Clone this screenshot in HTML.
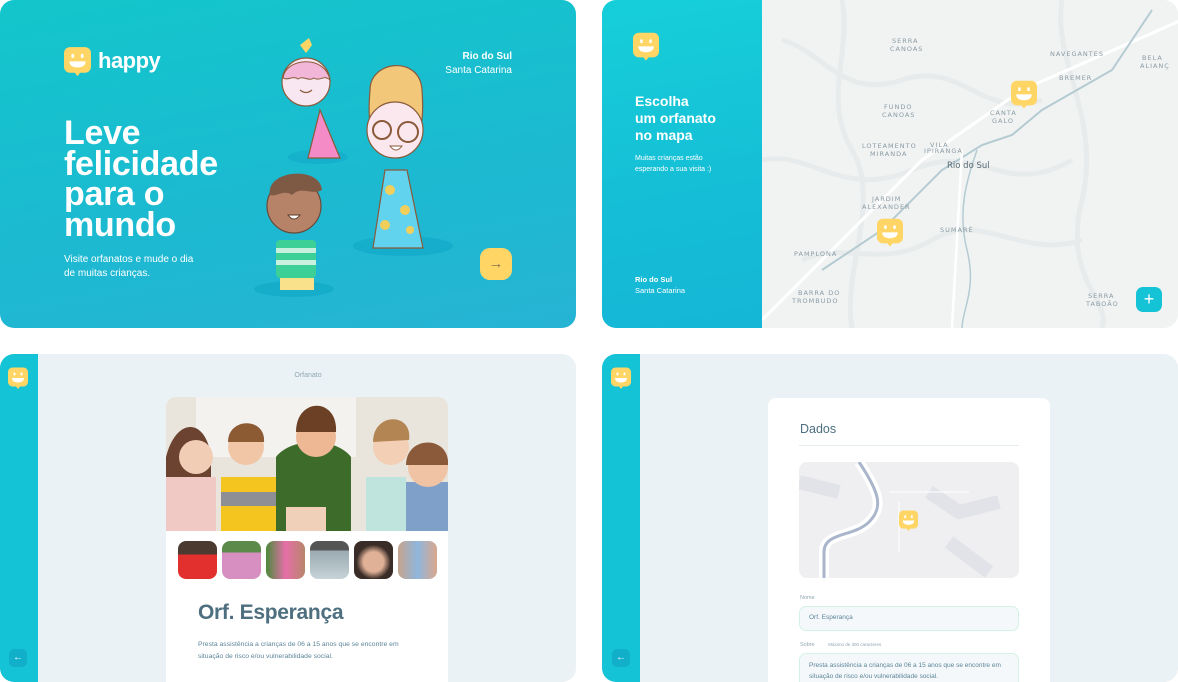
<!DOCTYPE html>
<html><head><meta charset="utf-8"><style>
*{margin:0;padding:0;box-sizing:border-box}
body{width:1178px;height:682px;background:#fff;position:relative;overflow:hidden;font-family:"Liberation Sans",sans-serif}
.p{position:absolute;overflow:hidden;border-radius:14px}
.abs{position:absolute}
.w{color:#fff}
</style></head><body>
<svg width="0" height="0" style="position:absolute"><defs>
<symbol id="logo" viewBox="0 0 40 44"><path d="M9 0h22a9 9 0 0 1 9 9v20a9 9 0 0 1-9 9h-7l-4 5-4-5H9a9 9 0 0 1-9-9V9a9 9 0 0 1 9-9z" fill="#ffd666"/><rect x="11" y="10" width="4" height="6" rx="2" fill="#fff"/><rect x="25" y="10" width="4" height="6" rx="2" fill="#fff"/><path d="M8 21h24c0 6-5 9-12 9s-12-3-12-9z" fill="#fff"/></symbol>
</defs></svg>

<!-- Panel 1 -->
<div class="p" style="left:0;top:0;width:576px;height:328px;background:linear-gradient(170deg,#13c6cc 0%,#1cb9d1 60%,#27b4d4 100%)">
  <svg class="abs" style="left:64px;top:47px" width="27" height="30"><use href="#logo"/></svg>
  <div class="abs w" style="left:98px;top:48px;font-size:22px;font-weight:bold;letter-spacing:-0.5px">happy</div>
  <div class="abs w" style="left:440px;top:50px;width:72px;text-align:right;font-size:10px;line-height:14px"><b>Rio do Sul</b><br>Santa Catarina</div>
  <div class="abs w" style="left:64px;top:118px;font-size:34px;font-weight:bold;line-height:30.5px;letter-spacing:-0.3px">Leve<br>felicidade<br>para o<br>mundo</div>
  <div class="abs w" style="left:64px;top:253px;font-size:10px;line-height:14px">Visite orfanatos e mude o dia<br>de muitas crianças.</div>
  <div class="abs" style="left:480px;top:248px;width:32px;height:32px;border-radius:10px;background:#ffd666;color:#8d734b;font-size:15px;text-align:center;line-height:31px">→</div>
  <svg class="abs" style="left:240px;top:30px" width="230" height="270">
    <ellipse cx="54" cy="259" rx="40" ry="8" fill="#0fa7c7" opacity=".6"/>
    <ellipse cx="163" cy="216" rx="50" ry="10" fill="#0fa7c7" opacity=".6"/>
    <ellipse cx="78" cy="127" rx="30" ry="7" fill="#0fa7c7" opacity=".45"/>
    <path d="M80 80l-12 48h32z" fill="#f48bc7" stroke="#8a5a3a" stroke-width="1.2"/>
    <circle cx="66" cy="52" r="24" fill="#f8e7f0" stroke="#8a5a3a" stroke-width="1.2"/>
    <path d="M43 48c2-20 42-24 47 2c-6-6-10 2-16-2c-6 4-10-3-16 1c-5-4-10 2-15-1z" fill="#f2b6d8" stroke="#8a5a3a" stroke-width="1"/>
    <path d="M60 15l6 8 6-8-3-7z" fill="#ffd666"/>
    <path d="M60 60q6 5 12 0" fill="none" stroke="#8a5a3a" stroke-width="1.2"/>
    <path d="M130 60c0-30 50-35 52 0c2 30 0 40-10 45h-35c-8-5-9-20-7-45z" fill="#f2c77a" stroke="#8a5a3a" stroke-width="1.2"/>
    <circle cx="155" cy="100" r="28" fill="#fbe8ee" stroke="#8a5a3a" stroke-width="1.2"/>
    <circle cx="142" cy="100" r="9" fill="none" stroke="#8a5a3a" stroke-width="2"/>
    <circle cx="168" cy="102" r="10" fill="none" stroke="#8a5a3a" stroke-width="2"/>
    <path d="M150 116q6 8 12 0z" fill="#fff" stroke="#8a5a3a"/>
    <path d="M145 140l-12 78h50l-16-78z" fill="#61d3ef" stroke="#8a5a3a" stroke-width="1.2"/>
    <circle cx="150" cy="160" r="5" fill="#f2cf5a"/><circle cx="165" cy="180" r="5" fill="#f2cf5a"/><circle cx="145" cy="195" r="5" fill="#f2cf5a"/><circle cx="170" cy="200" r="4" fill="#f2cf5a"/>
    <circle cx="54" cy="176" r="27" fill="#b78368" stroke="#6a4a3a" stroke-width="1.2"/>
    <path d="M30 165c-5-25 50-30 52-5c-10 6-20-5-30 5c-8-6-15 2-22 0z" fill="#7e5a45"/>
    <path d="M48 185q6 8 12 0z" fill="#fff" stroke="#5a3a2a"/>
    <rect x="36" y="210" width="40" height="38" rx="4" fill="#3ccf96"/>
    <rect x="36" y="218" width="40" height="5" fill="#c8f0df"/><rect x="36" y="230" width="40" height="5" fill="#c8f0df"/>
    <rect x="40" y="248" width="34" height="12" fill="#f9e08a"/>
  </svg>
</div>

<!-- Panel 2 -->
<div class="p" style="left:602px;top:0;width:576px;height:328px;background:#f1f3f3">
  <svg class="abs" style="left:160px;top:0" width="416" height="328">
    <g fill="none" stroke="#e1e6e8" stroke-width="5" opacity=".6">
      <path d="M20 40c40 10 60 60 120 40s80 40 140 20"/><path d="M0 160c50-10 80 40 150 10s90 30 160-10"/><path d="M40 260c40-20 80 10 130-20s90 20 150 0"/><path d="M300 0c-10 60 40 120 20 200s30 100 20 128"/><path d="M80 0c10 50-20 100 10 150s-10 120 0 178"/>
    </g>
    <path d="M0 320l160-160 100-70 160-70" stroke="#fff" stroke-width="3" fill="none"/>
    <path d="M60 270l60-40 60-60 40-25 30-10 30-25 70-40 40-60" stroke="#b4cbd2" stroke-width="2" fill="none"/>
    <path d="M215 150c-10 30-20 60-10 100s-5 60-5 78" stroke="#b4cbd2" stroke-width="1.5" fill="none"/>
    <path d="M200 150l-10 178" stroke="#fff" stroke-width="2.5" fill="none"/>
    <g font-family="DejaVu Sans" font-size="6.5" fill="#8a9ba4" letter-spacing="1">
      <text x="130" y="43">SERRA</text><text x="128" y="51">CANOAS</text>
      <text x="122" y="109">FUNDO</text><text x="120" y="117">CANOAS</text>
      <text x="100" y="148">LOTEAMENTO</text><text x="108" y="156">MIRANDA</text>
      <text x="168" y="147">VILA</text><text x="162" y="153">IPIRANGA</text>
      <text x="110" y="201">JARDIM</text><text x="100" y="209">ALEXANDER</text>
      <text x="178" y="232">SUMARÉ</text><text x="32" y="256">PAMPLONA</text>
      <text x="36" y="295">BARRA DO</text><text x="30" y="303">TROMBUDO</text>
      <text x="228" y="115">CANTA</text><text x="230" y="123">GALO</text>
      <text x="288" y="56">NAVEGANTES</text><text x="297" y="80">BREMER</text>
      <text x="326" y="298">SERRA</text><text x="324" y="306">TABOÃO</text>
      <text x="380" y="60">BELA</text><text x="378" y="68">ALIANÇ</text>
    </g>
    <text x="185" y="168" font-family="DejaVu Sans" font-size="8.5" fill="#5a6d76">Rio do Sul</text>
  </svg>
  <svg class="abs" style="left:409px;top:80px" width="26" height="30"><use href="#logo"/></svg>
  <svg class="abs" style="left:275px;top:218px" width="26" height="30"><use href="#logo"/></svg>
  <div class="abs" style="left:534px;top:287px;width:26px;height:25px;border-radius:7px;background:#15c3d6;color:#fff;font-size:18px;text-align:center;line-height:24px">+</div>
  <div class="abs" style="left:0;top:0;width:160px;height:328px;background:linear-gradient(170deg,#16cfd9 0%,#15bed6 60%,#15b6d6 100%)">
    <svg class="abs" style="left:31px;top:32px" width="26" height="30"><use href="#logo"/></svg>
    <div class="abs w" style="left:33px;top:93px;font-size:14px;font-weight:bold;line-height:17px">Escolha<br>um orfanato<br>no mapa</div>
    <div class="abs w" style="left:33px;top:153px;font-size:7px;line-height:11px">Muitas crianças estão<br>esperando a sua visita :)</div>
    <div class="abs w" style="left:33px;top:274px;font-size:7.5px;line-height:11px"><b>Rio do Sul</b><br>Santa Catarina</div>
  </div>
</div>

<!-- Panel 3 -->
<div class="p" style="left:0;top:354px;width:576px;height:328px;background:#ebf2f5">
  <div class="abs" style="left:0;top:0;width:38px;height:328px;background:#15c3d6">
    <svg class="abs" style="left:8px;top:12px" width="20" height="25"><use href="#logo"/></svg>
    <div class="abs" style="left:9px;top:295px;width:18px;height:18px;border-radius:5px;background:#12afcb;color:#fff;font-size:10px;text-align:center;line-height:17px">←</div>
  </div>
  <div class="abs" style="left:38px;top:18px;width:540px;text-align:center;font-size:7px;color:#8fa7b3">Orfanato</div>
  <div class="abs" style="left:166px;top:43px;width:282px;height:300px;background:#fff;border-radius:10px;overflow:hidden">
    <svg class="abs" style="left:0;top:0" width="282" height="134">
      <rect width="282" height="134" fill="#e9e4dc"/>
      <rect x="30" y="0" width="160" height="60" fill="#f4f2ee"/>
      <path d="M0 60c10-40 40-40 45 0v74H0z" fill="#6b4330"/>
      <rect x="0" y="80" width="50" height="54" fill="#f0c8c4"/>
      <circle cx="30" cy="60" r="17" fill="#f2cdb5"/>
      <path d="M55 80h55v54H55z" fill="#f5c51f"/><path d="M55 95h55v14H55z" fill="#8d8f94"/>
      <circle cx="80" cy="50" r="18" fill="#f1c6a6"/><path d="M62 45c0-25 38-25 36 0z" fill="#8c5a33"/>
      <path d="M110 60c15-20 60-20 75 0v74h-75z" fill="#3c6b2a"/>
      <circle cx="150" cy="40" r="20" fill="#eeb894"/><path d="M130 35c0-35 42-35 40 0z" fill="#6b4024"/>
      <path d="M200 80h40v54h-40z" fill="#bfe4dd"/>
      <circle cx="225" cy="50" r="18" fill="#f2cfb5"/><path d="M207 45c0-30 40-30 36-2z" fill="#b38552"/>
      <path d="M240 85h42v49h-42z" fill="#7fa1c9"/>
      <circle cx="262" cy="70" r="20" fill="#efc3a3"/><path d="M240 68c0-30 44-30 42 0z" fill="#8b5a3a"/>
      <rect x="120" y="110" width="40" height="24" fill="#f0d0b8"/>
    </svg>
    <div class="abs" style="left:12px;top:144px;width:39px;height:38px;border-radius:8px;background:linear-gradient(#4a3a30 35%,#e2302e 35%)"></div>
    <div class="abs" style="left:56px;top:144px;width:39px;height:38px;border-radius:8px;background:linear-gradient(#5c8a4a 30%,#d68fc0 30%)"></div>
    <div class="abs" style="left:100px;top:144px;width:39px;height:38px;border-radius:8px;background:linear-gradient(90deg,#4a8a3a,#e66fa8 50%,#b8856a)"></div>
    <div class="abs" style="left:144px;top:144px;width:39px;height:38px;border-radius:8px;background:linear-gradient(#555 25%,#9aaab0 25%,#c6d3d8)"></div>
    <div class="abs" style="left:188px;top:144px;width:39px;height:38px;border-radius:8px;background:radial-gradient(circle at 50% 55%,#e0b197 35%,#3a2c26 60%)"></div>
    <div class="abs" style="left:232px;top:144px;width:39px;height:38px;border-radius:8px;background:linear-gradient(90deg,#c5a48d,#8fb6dd 50%,#d9a88c)"></div>
    <div class="abs" style="left:32px;top:204px;font-size:21px;color:#4d6f80;font-weight:bold;letter-spacing:-0.3px">Orf. Esperança</div>
    <div class="abs" style="left:32px;top:242px;font-size:6.8px;color:#5c8599;line-height:11.5px">Presta assistência a crianças de 06 a 15 anos que se encontre em<br>situação de risco e/ou vulnerabilidade social.</div>
  </div>
</div>

<!-- Panel 4 -->
<div class="p" style="left:602px;top:354px;width:576px;height:328px;background:#ebf2f5">
  <div class="abs" style="left:0;top:0;width:38px;height:328px;background:#15c3d6">
    <svg class="abs" style="left:9px;top:12px" width="20" height="25"><use href="#logo"/></svg>
    <div class="abs" style="left:10px;top:295px;width:18px;height:18px;border-radius:5px;background:#12afcb;color:#fff;font-size:10px;text-align:center;line-height:17px">←</div>
  </div>
  <div class="abs" style="left:166px;top:44px;width:282px;height:300px;background:#fff;border-radius:8px">
    <div class="abs" style="left:32px;top:24px;font-size:12.5px;color:#4d6f80">Dados</div>
    <div class="abs" style="left:31px;top:47px;width:220px;height:1px;background:#e3ebef"></div>
    <svg class="abs" style="left:31px;top:64px;border-radius:8px" width="220" height="116">
      <rect width="220" height="116" fill="#efeff1"/>
      <path d="M130 30l30 20 40-10M150 80l40 30M0 20l40 10" stroke="#e2e3e8" stroke-width="14" fill="none"/>
      <path d="M60 0c20 30 25 45 10 60s-45 10-45 30v26" stroke="#fff" stroke-width="10" fill="none"/>
      <path d="M60 0c20 30 25 45 10 60s-45 10-45 30v26" stroke="#a9b5cb" stroke-width="3" fill="none"/>
      <path d="M100 40l0 50M90 30h80" stroke="#fff" stroke-width="1" fill="none"/>
    </svg>
    <svg class="abs" style="left:131px;top:112px" width="19" height="22"><use href="#logo"/></svg>
    <div class="abs" style="left:32px;top:197px;font-size:5.5px;color:#8fa7b3">Nome</div>
    <div class="abs" style="left:31px;top:208px;width:220px;height:25px;border:1px solid #d3f2e5;border-radius:7px;background:#f5f8fa;font-size:6.5px;color:#5c8599;padding:7px 9px">Orf. Esperança</div>
    <div class="abs" style="left:32px;top:244px;font-size:5.5px;color:#8fa7b3">Sobre <span style="margin-left:12px;font-size:4.5px">Máximo de 300 caracteres</span></div>
    <div class="abs" style="left:31px;top:255px;width:220px;height:60px;border:1px solid #d3f2e5;border-radius:7px;background:#f5f8fa;font-size:6.5px;color:#5c8599;padding:6px 9px;line-height:11px">Presta assistência a crianças de 06 a 15 anos que se encontre em situação de risco e/ou vulnerabilidade social.</div>
  </div>
</div>
</body></html>
